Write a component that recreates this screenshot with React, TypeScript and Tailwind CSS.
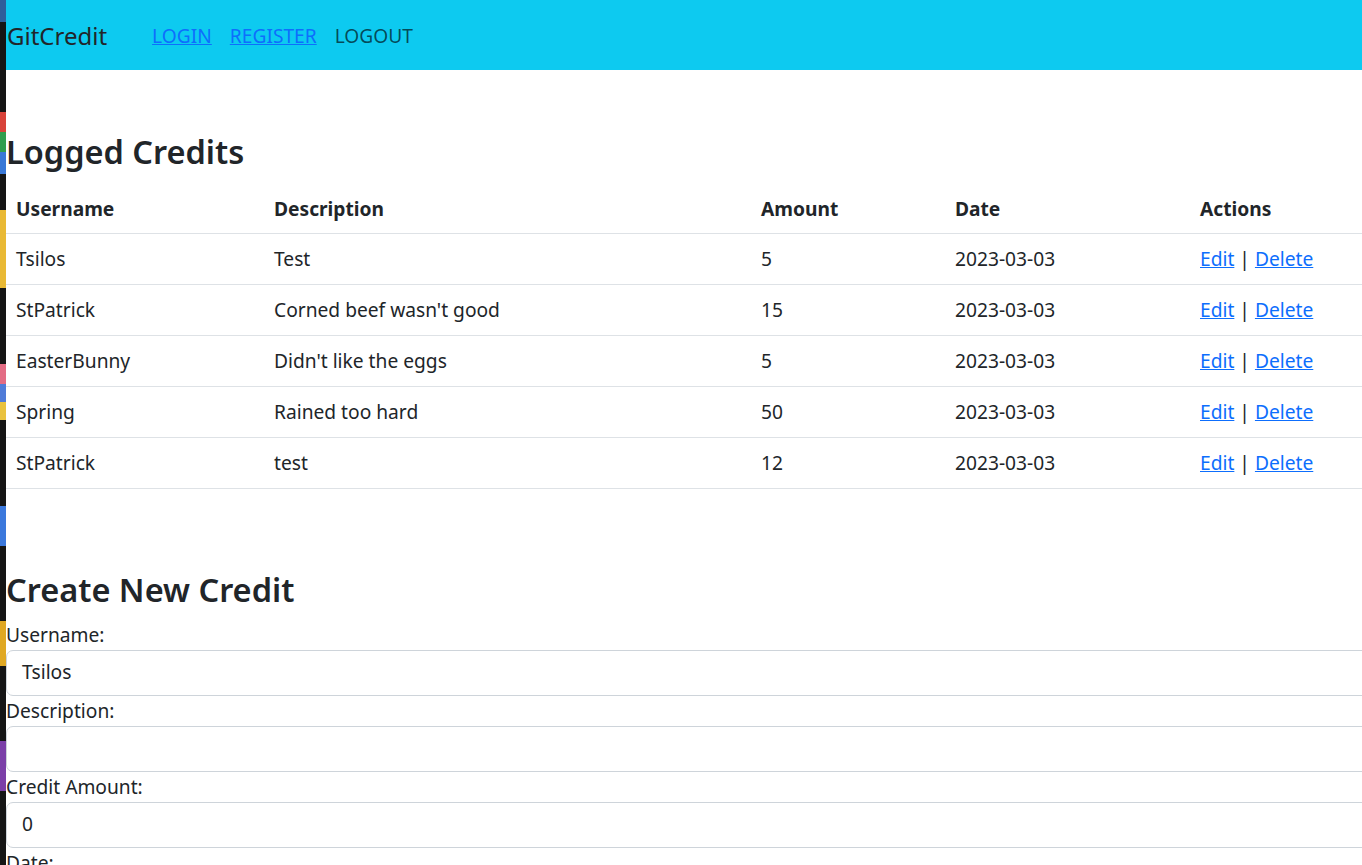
const credits = [
  { username: "Tsilos", description: "Test", amount: 5, date: "2023-03-03" },
  { username: "StPatrick", description: "Corned beef wasn't good", amount: 15, date: "2023-03-03" },
  { username: "EasterBunny", description: "Didn't like the eggs", amount: 5, date: "2023-03-03" },
  { username: "Spring", description: "Rained too hard", amount: 50, date: "2023-03-03" },
  { username: "StPatrick", description: "test", amount: 12, date: "2023-03-03" },
];

// slice of the desktop visible at the left edge of the screenshot
const DesktopStrip = () => (
  <div className="w-[6px] shrink-0 flex flex-col bg-[#151515]">
    <div className="h-[22px] bg-[#2f5f9a]" />
    <div className="h-[90px]" />
    <div className="h-[20px] bg-[#d8433a]" />
    <div className="h-[20px] bg-[#2f9e4f]" />
    <div className="h-[22px] bg-[#3a78d6]" />
    <div className="h-[36px]" />
    <div className="h-[78px] bg-[#e9b934]" />
    <div className="h-[76px]" />
    <div className="h-[20px] bg-[#e36c84]" />
    <div className="h-[18px] bg-[#4f7bd8]" />
    <div className="h-[18px] bg-[#e9c23e]" />
    <div className="h-[86px]" />
    <div className="h-[40px] bg-[#3b78dc]" />
    <div className="h-[75px]" />
    <div className="h-[45px] bg-[#e0a823]" />
    <div className="h-[75px]" />
    <div className="h-[50px] bg-[#7b3fa8]" />
    <div className="flex-1" />
  </div>
);

const Field = ({ label, value }: { label: string; value: string }) => (
  <div className="flex flex-col">
    <label className="leading-[30px]">{label}</label>
    <div className="h-[46px] rounded-[7px] border border-[#ced4da] bg-white px-[15px] flex items-center">
      {value}
    </div>
  </div>
);

export default function App() {
  return (
    <div
      className="flex h-[865px] w-[1362px] overflow-hidden bg-white text-[#212529] text-[19.2px]"
      style={{ fontFamily: '"Segoe UI", "Noto Sans", sans-serif' }}
    >
      <DesktopStrip />

      <div className="w-[1420px] shrink-0">
        {/* Navbar */}
        <nav className="h-[70px] bg-[#0dcaf0] flex items-center pt-[2px]">
          <span className="text-[24px] pl-[1px]">GitCredit</span>
          <div className="ml-[45px] flex items-center gap-[18px]">
            <a href="#" className="text-[#0d6efd] underline">LOGIN</a>
            <a href="#" className="text-[#0d6efd] underline">REGISTER</a>
            <span className="text-black/65">LOGOUT</span>
          </div>
        </nav>

        {/* Logged credits */}
        <h2 className="mt-[62px] mb-[13px] text-[32.5px] leading-[1.24] font-semibold">Logged Credits</h2>

        <div className="grid grid-cols-[258px_487px_194px_245px_1fr] font-bold h-[49px] items-center border-b border-[#dee2e6]">
          <div className="px-[10px]">Username</div>
          <div className="px-[10px]">Description</div>
          <div className="px-[10px]">Amount</div>
          <div className="px-[10px]">Date</div>
          <div className="px-[10px]">Actions</div>
        </div>

        {credits.map((c, i) => (
          <div
            key={i}
            className="grid grid-cols-[258px_487px_194px_245px_1fr] h-[51px] items-center border-b border-[#dee2e6]"
          >
            <div className="px-[10px]">{c.username}</div>
            <div className="px-[10px]">{c.description}</div>
            <div className="px-[10px]">{c.amount}</div>
            <div className="px-[10px]">{c.date}</div>
            <div className="px-[10px]">
              <a href="#" className="text-[#0d6efd] underline">Edit</a>
              {" | "}
              <a href="#" className="text-[#0d6efd] underline">Delete</a>
            </div>
          </div>
        ))}

        {/* Create form */}
        <h2 className="mt-[81px] mb-[9px] text-[32.5px] leading-[1.24] font-semibold">Create New Credit</h2>

        <div className="flex flex-col">
          <Field label="Username:" value="Tsilos" />
          <Field label="Description:" value="" />
          <Field label="Credit Amount:" value="0" />
          <Field label="Date:" value="" />
        </div>
      </div>
    </div>
  );
}
